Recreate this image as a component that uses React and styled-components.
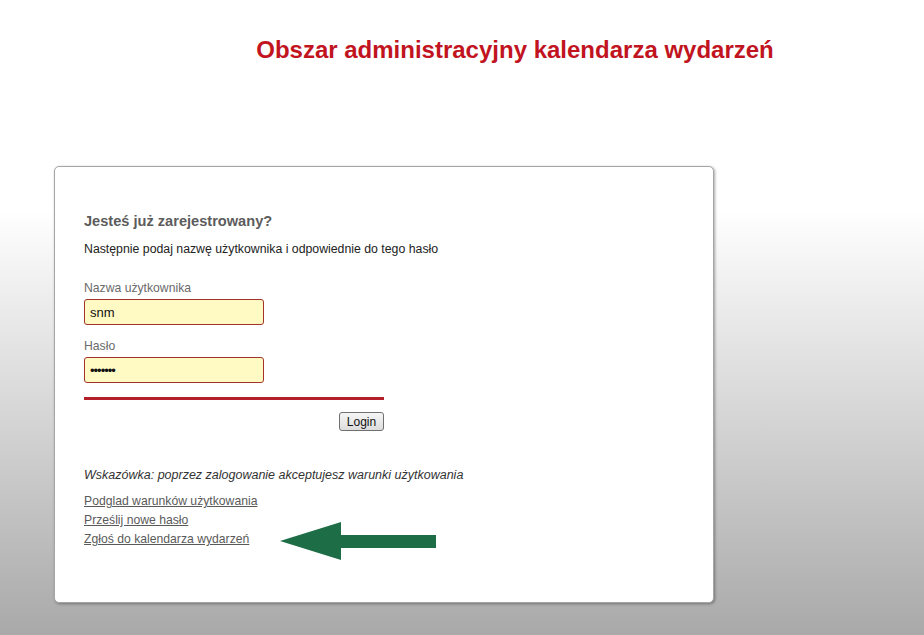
import React from 'react';
import styled, { createGlobalStyle } from 'styled-components';

const GlobalStyle = createGlobalStyle`
  html, body {
    margin: 0;
    padding: 0;
  }
  body {
    font-family: "Liberation Sans", Arial, sans-serif;
  }
`;

const Page = styled.div`
  min-height: 635px;
  overflow: hidden;
  background: linear-gradient(to bottom, #ffffff 0, #ffffff 210px, #a9a9a9 635px);
`;

const Title = styled.h1`
  margin: 36px 0 0;
  padding-left: 106px;
  font-size: 24px;
  line-height: 28px;
  font-weight: bold;
  text-align: center;
  color: #c1141f;
`;

const Card = styled.div`
  position: relative;
  box-sizing: border-box;
  width: 660px;
  height: 437px;
  margin: 102px 0 0 54px;
  padding: 45px 29px 0;
  background: #fff;
  border: 1px solid #a5a5a5;
  border-radius: 5px;
  box-shadow: 1px 1px 3px rgba(0, 0, 0, 0.35);
`;

const Heading = styled.h2`
  margin: 0;
  font-size: 14.6px;
  line-height: 18px;
  font-weight: bold;
  color: #5c5c5c;
`;

const Intro = styled.p`
  margin: 12px 0 0;
  font-size: 12.3px;
  line-height: 15px;
  color: #222;
`;

const Form = styled.form`
  display: flex;
  flex-direction: column;
  width: 300px;
  margin-top: 24px;
`;

const Label = styled.label`
  display: block;
  font-size: 12.2px;
  line-height: 15px;
  color: #6a6a6a;
  margin-top: ${(p) => (p.$first ? '0' : '14px')};
`;

const Field = styled.input`
  box-sizing: border-box;
  width: 180px;
  height: 26px;
  margin-top: 3px;
  padding: 0 5px;
  font-family: "Liberation Sans", Arial, sans-serif;
  font-size: 13px;
  letter-spacing: ${(p) => (p.type === 'password' ? '-1px' : '0')};
  color: #111;
  background: #fff9c4;
  border: 1px solid #a3322b;
  border-radius: 3px;
  outline: none;
`;

const Divider = styled.div`
  height: 3px;
  margin-top: 14px;
  background: #b3202a;
`;

const ButtonRow = styled.div`
  display: flex;
  justify-content: flex-end;
  margin-top: 12px;
`;

const LoginButton = styled.button`
  box-sizing: border-box;
  width: 45px;
  height: 19px;
  padding: 0;
  font-family: "Liberation Sans", Arial, sans-serif;
  font-size: 12px;
  color: #111;
  background: linear-gradient(to bottom, #f6f6f6, #dcdcdc);
  border: 1px solid #707070;
  border-radius: 3px;
`;

const Hint = styled.p`
  margin: 37px 0 0;
  font-size: 12.5px;
  line-height: 15px;
  font-style: italic;
  color: #333;
`;

const LinkList = styled.ul`
  list-style: none;
  margin: 9px 0 0;
  padding: 0;
`;

const LinkItem = styled.li`
  font-size: 12.2px;
  line-height: 19px;
`;

const TextLink = styled.a`
  color: #5a5a5a;
  text-decoration: underline;
`;

const Arrow = styled.svg`
  position: absolute;
  left: 225px;
  top: 355px;
`;

export default function App() {
  return (
    <Page>
      <GlobalStyle />
      <Title>Obszar administracyjny kalendarza wydarzeń</Title>
      <Card>
        <Heading>Jesteś już zarejestrowany?</Heading>
        <Intro>Następnie podaj nazwę użytkownika i odpowiednie do tego hasło</Intro>
        <Form onSubmit={(e) => e.preventDefault()}>
          <Label $first htmlFor="user">Nazwa użytkownika</Label>
          <Field id="user" type="text" defaultValue="snm" />
          <Label htmlFor="pass">Hasło</Label>
          <Field id="pass" type="password" defaultValue="1234567" />
          <Divider />
          <ButtonRow>
            <LoginButton type="submit">Login</LoginButton>
          </ButtonRow>
        </Form>
        <Hint>Wskazówka: poprzez zalogowanie akceptujesz warunki użytkowania</Hint>
        <LinkList>
          <LinkItem><TextLink href="#">Podglad warunków użytkowania</TextLink></LinkItem>
          <LinkItem><TextLink href="#">Prześlij nowe hasło</TextLink></LinkItem>
          <LinkItem><TextLink href="#">Zgłoś do kalendarza wydarzeń</TextLink></LinkItem>
        </LinkList>
        {/* green pointer drawn over the card */}
        <Arrow width="157" height="38" viewBox="0 0 157 38">
          <polygon points="0,19 61,0 61,13 156,13 156,26 61,26 61,38" fill="#1d6d47" />
        </Arrow>
      </Card>
    </Page>
  );
}
